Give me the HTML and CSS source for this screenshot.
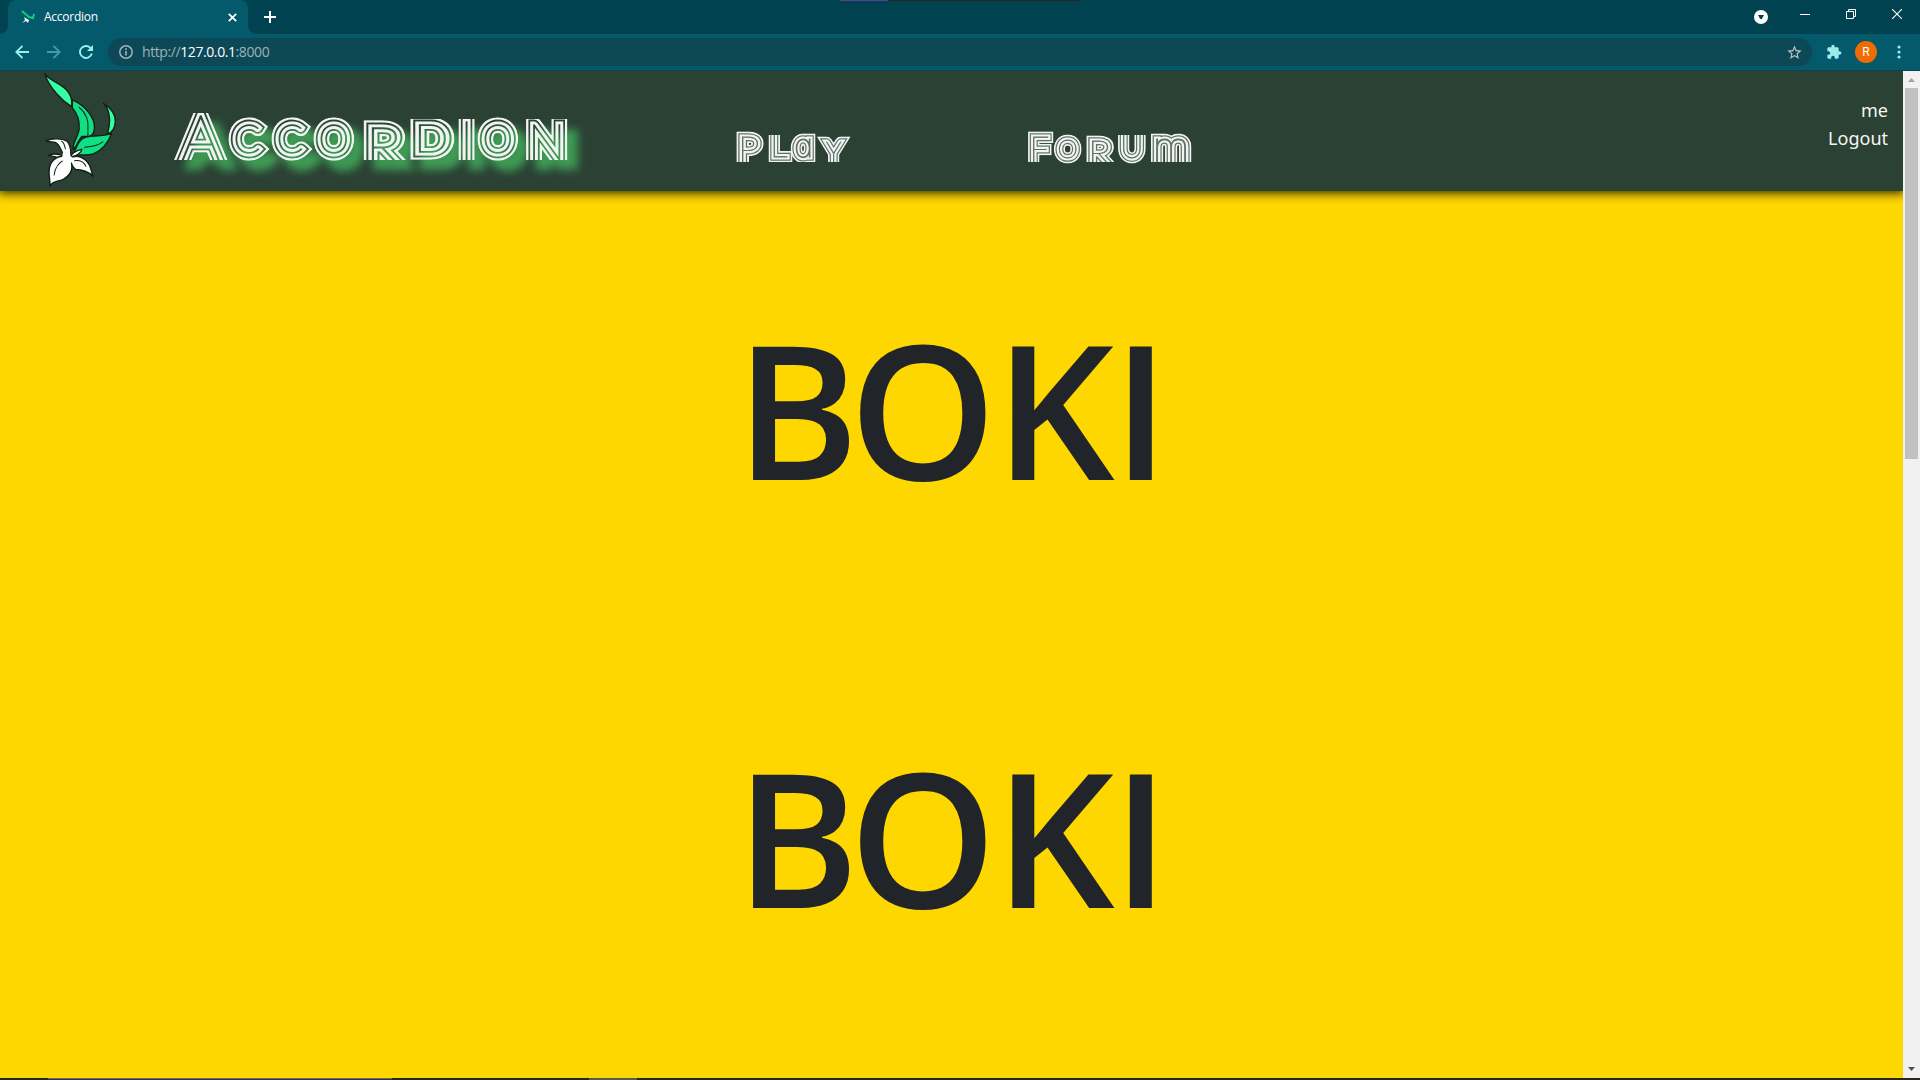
FILE: index.html
```html
<!DOCTYPE html>
<html lang="en">
<head>
<meta charset="utf-8">
<title>Accordion</title>
<link rel="stylesheet" href="styles.css">
</head>
<body>
<svg class="defs" aria-hidden="true">
  <defs>
    <symbol id="flower" viewBox="70 15 225 345">
      <g stroke="#101f17" stroke-width="4" stroke-linejoin="round" stroke-linecap="round">
        <path fill="#0fe083" d="M160 100C190 112 216 140 224 168C228 192 222 206 206 208L188 208C176 222 172 240 162 246C160 228 176 210 180 188C182 162 174 140 160 124Z"/>
        <path fill="none" stroke-width="3" d="M180 122C202 140 208 164 206 180L206 206"/>
        <path fill="#36ffa3" d="M78 22C90 42 122 48 142 70C154 84 160 94 158 120C132 104 92 66 78 22Z"/>
        <path fill="#36ffa3" d="M252 110C276 124 288 146 287 164C286 182 280 196 264 200C268 180 274 166 268 142C266 130 260 118 252 110Z"/>
        <path fill="#0fe083" d="M276 200C262 206 240 204 214 208C190 208 178 224 172 240L162 262C184 262 206 266 222 260C246 250 264 230 276 200Z"/>
        <path fill="none" stroke-width="3" d="M196 240C222 238 238 234 250 224"/>
        <path fill="#fff" d="M82 222C98 212 130 214 144 222C156 236 156 250 154 264L136 262C124 252 126 234 110 226Z"/>
        <path fill="none" stroke-width="3" d="M128 222C142 232 136 248 144 260"/>
        <path fill="#fff" d="M90 264C102 258 120 260 136 266L126 272Z"/>
        <path fill="#fff" d="M156 264C168 250 180 248 188 246C186 258 174 264 158 268Z"/>
        <path fill="#fff" d="M152 272C176 260 198 272 210 292C216 304 216 316 222 326C206 312 190 306 170 306C160 298 154 290 152 272Z"/>
        <path fill="#fff" d="M138 266C108 266 92 284 91 310C90 330 96 342 93 356C102 338 114 344 134 334C156 322 162 302 156 282Z"/>
        <path fill="none" stroke-width="3" d="M106 322C108 302 118 286 138 276M166 280C182 278 194 284 200 296"/>
      </g>
      <path fill="#fff" d="M134 246L152 246L154 266L168 276L152 290L128 278Z"/>
    </symbol>
  </defs>
</svg>

<div class="tabstrip">
  <div class="tab">
    <svg class="favicon" viewBox="0 0 14 14"><path d="M1 1L8 7L12 8L13 4" fill="none" stroke="#0fce7c" stroke-width="2"/><path d="M3 7L8 10L7 13L5 11L1 13L4 10Z" fill="#eee"/></svg>
    <span class="tab-title">Accordion</span>
    <svg class="tab-close" viewBox="0 0 9 9"><path d="M.8.8L8.2 8.2M8.2.8L.8 8.2" stroke="#fff" stroke-width="1.7"/></svg>
  </div>
  <svg class="newtab" viewBox="0 0 12 12"><path d="M6 0V12M0 6H12" stroke="#fff" stroke-width="2"/></svg>
  <div class="window-controls">
    <svg class="search-tabs" viewBox="0 0 14 14"><circle cx="7" cy="7" r="7" fill="#fff"/><path d="M4 5H10L7.8 9H6.2Z" fill="#00424f"/></svg>
    <svg class="ctl-min" viewBox="0 0 10 10"><path d="M0 5.5H10" stroke="#fff"/></svg>
    <svg class="ctl-max" viewBox="0 0 10 10"><path d="M.5 2.5H7.5V9.5H.5ZM2.5 2.5V.5H9.5V7.5H7.5" fill="none" stroke="#fff"/></svg>
    <svg class="ctl-close" viewBox="0 0 10 10"><path d="M0 0L10 10M10 0L0 10" stroke="#fff" stroke-width="1.1"/></svg>
  </div>
  <div class="edge-strip"></div>
</div>

<div class="toolbar">
  <svg class="nav-btn" viewBox="0 0 14 14"><path d="M14 7H1.5M7.5 .8L1.3 7L7.5 13.2" fill="none" stroke="#9cecec" stroke-width="1.9"/></svg>
  <svg class="nav-btn off" viewBox="0 0 14 14"><path d="M0 7H12.5M6.5 .8L12.7 7L6.5 13.2" fill="none" stroke="#9cecec" stroke-width="1.9"/></svg>
  <svg class="nav-btn" viewBox="0 0 14 14"><path d="M12.8 8.5A6 6 0 1 1 11.2 2.7L12 3.6" fill="none" stroke="#9cecec" stroke-width="1.9"/><path d="M14 0V6H8Z" fill="#9cecec"/></svg>
  <div class="omnibox">
    <svg class="info" viewBox="0 0 14 14"><circle cx="7" cy="7" r="6.2" fill="none" stroke="#9fb4bb" stroke-width="1.5"/><path d="M7 6V10.5M7 3.3V4.9" stroke="#9fb4bb" stroke-width="1.6"/></svg>
    <span class="url">http://<b>127.0.0.1</b>:8000</span>
    <svg class="star" viewBox="0 0 24 24"><path fill="#bcc4c8" d="M22 9.24l-7.19-.62L12 2 9.19 8.63 2 9.24l5.46 4.73L5.82 21 12 17.27 18.18 21l-1.63-7.03L22 9.24zM12 15.4l-3.76 2.27 1-4.28-3.32-2.88 4.38-.38L12 6.1l1.71 4.04 4.38.38-3.32 2.88 1 4.28L12 15.4z"/></svg>
  </div>
  <svg class="puzzle" viewBox="0 0 24 24"><path fill="#9ceceb" d="M20.5 11H19V7c0-1.1-.9-2-2-2h-4V3.5C13 2.12 11.88 1 10.5 1S8 2.12 8 3.5V5H4c-1.1 0-1.99.9-1.99 2v3.8H3.5c1.49 0 2.7 1.21 2.7 2.7s-1.21 2.7-2.7 2.7H2V20c0 1.1.9 2 2 2h3.8v-1.5c0-1.49 1.21-2.7 2.7-2.7 1.49 0 2.7 1.21 2.7 2.7V22H17c1.1 0 2-.9 2-2v-4h1.5c1.38 0 2.5-1.12 2.5-2.5S21.88 11 20.5 11z"/></svg>
  <span class="avatar">R</span>
  <svg class="kebab" viewBox="0 0 4 14"><g fill="#9ceceb"><circle cx="2" cy="2" r="1.6"/><circle cx="2" cy="7" r="1.6"/><circle cx="2" cy="12" r="1.6"/></g></svg>
</div>

<div class="viewport">
  <div class="page">
    <header class="header">
      <svg class="logo"><use href="#flower"/></svg>
      <svg class="word brand" viewBox="160 71 440 120">
        <clipPath id="c-brand"><path d="M160 113H230V110H362V119H475V110H525V119H600V160H525V170H475V160H362V170H238V160H160Z"/></clipPath>
        <mask id="m-brand" maskUnits="userSpaceOnUse" x="160" y="71" width="440" height="120">
          <use href="#t-brand" stroke="#fff" stroke-width="15.5" fill="#fff"/>
          <use href="#t-brand" stroke="#000" stroke-width="10.8" fill="#000"/>
          <use href="#t-brand" stroke="#fff" stroke-width="7.2" fill="#fff"/>
          <use href="#t-brand" stroke="#000" stroke-width="1.3" fill="#000"/>
        </mask>
        <g class="glow"><g clip-path="url(#c-brand)"><g mask="url(#m-brand)"><g fill="#f2f4f3" stroke="#f2f4f3" stroke-width="15.5">
          <g id="t-brand" class="caps" font-size="39">
            <text x="181 233.5 276.5 318.5" y="160 153 153 153"><tspan font-size="62">A</tspan>cco</text>
            <text transform="translate(365.5 166) scale(1.15 1)" font-size="53">r</text>
            <text transform="translate(414.5 152.3) scale(1.2 1)" font-size="37">d</text>
            <text x="460 482.5 528" y="160 153 160"><tspan font-size="54">i</tspan>o<tspan font-size="50">n</tspan></text>
          </g>
        </g></g></g></g>
      </svg>
      <svg class="word play" viewBox="726 71 140 120">
        <clipPath id="c-play"><path d="M726 125H768V135H790V125H821V135H866V162H726Z"/></clipPath>
        <mask id="m-play" maskUnits="userSpaceOnUse" x="726" y="71" width="140" height="120">
          <use href="#t-play" stroke="#fff" stroke-width="11" fill="#fff"/>
          <use href="#t-play" stroke="#444" stroke-width="7.6" fill="#444"/>
          <use href="#t-play" stroke="#fff" stroke-width="5.2" fill="#fff"/>
          <use href="#t-play" stroke="#444" stroke-width=".8" fill="#444"/>
        </mask>
        <g clip-path="url(#c-play)"><g mask="url(#m-play)"><g fill="#f2f4f3" stroke="#f2f4f3" stroke-width="11">
          <g id="t-play" class="caps">
            <text transform="translate(738 162) scale(1.1 1)" font-size="35">P</text>
            <text x="770 794 826" y="156.5 157 162"><tspan font-size="35">l</tspan><tspan class="round" font-size="33">a</tspan><tspan font-size="27">y</tspan></text>
          </g>
        </g></g></g>
      </svg>
      <svg class="word forum" viewBox="1018 71 190 120">
        <clipPath id="c-forum"><path d="M1018 125H1117V135H1148V125H1208V162H1148V165H1117V162H1085V165H1054V162H1018Z"/></clipPath>
        <mask id="m-forum" maskUnits="userSpaceOnUse" x="1018" y="71" width="190" height="120">
          <use href="#t-forum" stroke="#fff" stroke-width="11" fill="#fff"/>
          <use href="#t-forum" stroke="#444" stroke-width="7.6" fill="#444"/>
          <use href="#t-forum" stroke="#fff" stroke-width="5.2" fill="#fff"/>
          <use href="#t-forum" stroke="#444" stroke-width=".8" fill="#444"/>
        </mask>
        <g clip-path="url(#c-forum)"><g mask="url(#m-forum)"><g fill="#f2f4f3" stroke="#f2f4f3" stroke-width="11">
          <g id="t-forum" class="caps">
            <text x="1029.5" y="162" font-size="35">F</text>
            <text x="1057.5" y="157.5" font-size="26">o</text>
            <text transform="translate(1088 166) scale(1.12 1)" font-size="35">r</text>
            <text x="1120" y="157.5" font-size="33">u</text>
            <text class="round" transform="translate(1152.5 162) scale(1.05 1)" font-size="41">m</text>
          </g>
        </g></g></g>
      </svg>
      <div class="account"><span>me</span><span>Logout</span></div>
    </header>
    <main class="content">
      <h1><span class="tight">B</span>OKI</h1>
      <h1><span class="tight">B</span>OKI</h1>
    </main>
  </div>
  <div class="scrollbar">
    <svg class="arrow" viewBox="0 0 17 17"><path d="M5 11L8.5 7L12 11Z" fill="#a3a3a3"/></svg>
    <div class="thumb"></div>
    <svg class="arrow down" viewBox="0 0 17 17"><path d="M5 6L8.5 10L12 6Z" fill="#505050"/></svg>
  </div>
</div>
<div class="taskbar"><i class="task-search"></i><i class="task-active"></i></div>
</body>
</html>
```
FILE: styles.css
```css
* { box-sizing: border-box; }
body {
  margin: 0;
  width: 1920px;
  height: 1080px;
  overflow: hidden;
  display: flex;
  flex-direction: column;
  font-family: "Noto Sans", "Open Sans", sans-serif;
  background: #ffd700;
}
svg { display: block; flex: none; }
.defs { position: absolute; width: 0; height: 0; }

.tabstrip {
  position: relative;
  height: 34px;
  flex: none;
  display: flex;
  background: #00424f;
  padding-left: 8px;
}
.tab {
  position: relative;
  width: 240px;
  height: 34px;
  background: #04596a;
  border-radius: 8px 8px 0 0;
  display: flex;
  align-items: center;
  padding: 0 11px 0 13px;
}
.tab::before, .tab::after {
  content: "";
  position: absolute;
  bottom: 0;
  width: 8px;
  height: 8px;
}
.tab::before { left: -8px; background: radial-gradient(circle at 0 0, #00424f 7.5px, #04596a 8px); }
.tab::after { right: -8px; background: radial-gradient(circle at 100% 0, #00424f 7.5px, #04596a 8px); }
.favicon { width: 14px; height: 14px; }
.tab-title {
  flex: 1;
  padding-left: 9px;
  font: 12px/16px "Open Sans", sans-serif;
  letter-spacing: -.25px;
  color: #fff;
}
.tab-close { width: 9px; height: 9px; }
.newtab { width: 12px; height: 12px; margin: 11px 0 0 16px; }
.window-controls { margin-left: auto; display: flex; padding-right: 18px; }
.search-tabs { width: 14px; height: 14px; margin: 10px 32px 0 0; }
.ctl-min, .ctl-max, .ctl-close { width: 10px; height: 10px; margin-top: 9px; }
.ctl-min, .ctl-max { margin-right: 36px; }
.edge-strip {
  position: absolute;
  left: 840px;
  top: 0;
  width: 241px;
  height: 1px;
  background: linear-gradient(90deg, #56438c 48px, #252525 48px);
}

.toolbar {
  height: 37px;
  flex: none;
  display: flex;
  align-items: center;
  background: #04596a;
  border-bottom: 1px solid #0b4550;
  padding: 0 21px 0 15px;
}
.nav-btn { width: 14px; height: 14px; margin-right: 18px; }
.nav-btn.off { opacity: .45; }
.omnibox {
  width: 1704px;
  height: 28px;
  margin-left: -3px;
  border-radius: 14px;
  background: #0d4857;
  display: flex;
  align-items: center;
  padding: 0 9px 0 11px;
}
.info { width: 14px; height: 14px; }
.url {
  flex: 1;
  padding-left: 9px;
  font: 14px/20px "Open Sans", sans-serif;
  letter-spacing: -.41px;
  color: #9cb2b9;
}
.url b { font-weight: 400; color: #fff; }
.star { width: 17px; height: 17px; }
.puzzle { width: 16px; height: 16px; margin-left: 14px; }
.avatar {
  width: 22px;
  height: 22px;
  margin-left: 13px;
  border-radius: 50%;
  background: #ef6c00;
  color: #fff;
  font: 12px/22px Roboto, sans-serif;
  text-align: center;
}
.kebab { width: 4px; height: 14px; margin-left: auto; margin-right: -2px; }

.viewport { flex: 1; min-height: 0; display: flex; }
.page { width: 1903px; display: flex; flex-direction: column; overflow: hidden; background: #ffd700; }
.header {
  height: 120px;
  flex: none;
  display: flex;
  background: #2b4134;
  box-shadow: 0 0 10px 2px rgba(0, 0, 0, .85);
  padding-right: 15px;
}
.logo { width: 76px; height: 117px; margin-left: 42px; }
.word { height: 120px; }
.brand { width: 440px; margin-left: 42px; }
.play { width: 140px; margin-left: 126px; }
.forum { width: 190px; margin-left: 152px; }
.caps { font-family: Lato, sans-serif; font-weight: 100; text-transform: uppercase; stroke-miterlimit: 3; }
.round { font-family: Inter, sans-serif; font-weight: 100; text-transform: none; font-feature-settings: "cv11" 1; }
.glow { filter: drop-shadow(10px 10px 4px #4bd268); }
.account {
  margin-left: auto;
  padding-top: 25px;
  display: flex;
  flex-direction: column;
  align-items: flex-end;
  font: 18px/28px "Noto Sans", sans-serif;
  color: #f4f6f5;
}

.content { display: flex; flex-direction: column; align-items: center; }
h1 {
  margin: 0;
  height: 428px;
  padding-top: 73px;
  font: 600 187.5px/288px "Open Sans", sans-serif;
  letter-spacing: -2px;
  color: #212529;
}
.tight { letter-spacing: -10px; }

.scrollbar { width: 17px; background: #f1f1f1; display: flex; flex-direction: column; }
.arrow { width: 17px; height: 17px; }
.thumb { width: 13px; height: 371px; margin-left: 2px; background: #c1c1c1; }
.arrow.down { margin-top: auto; }

.taskbar { height: 2px; flex: none; display: flex; background: #28261b; }
.task-search { width: 344px; margin-left: 48px; background: #343338; border-top: 1px solid #68686d; }
.task-active { width: 48px; margin-left: 197px; background: #5b584c; }
```
